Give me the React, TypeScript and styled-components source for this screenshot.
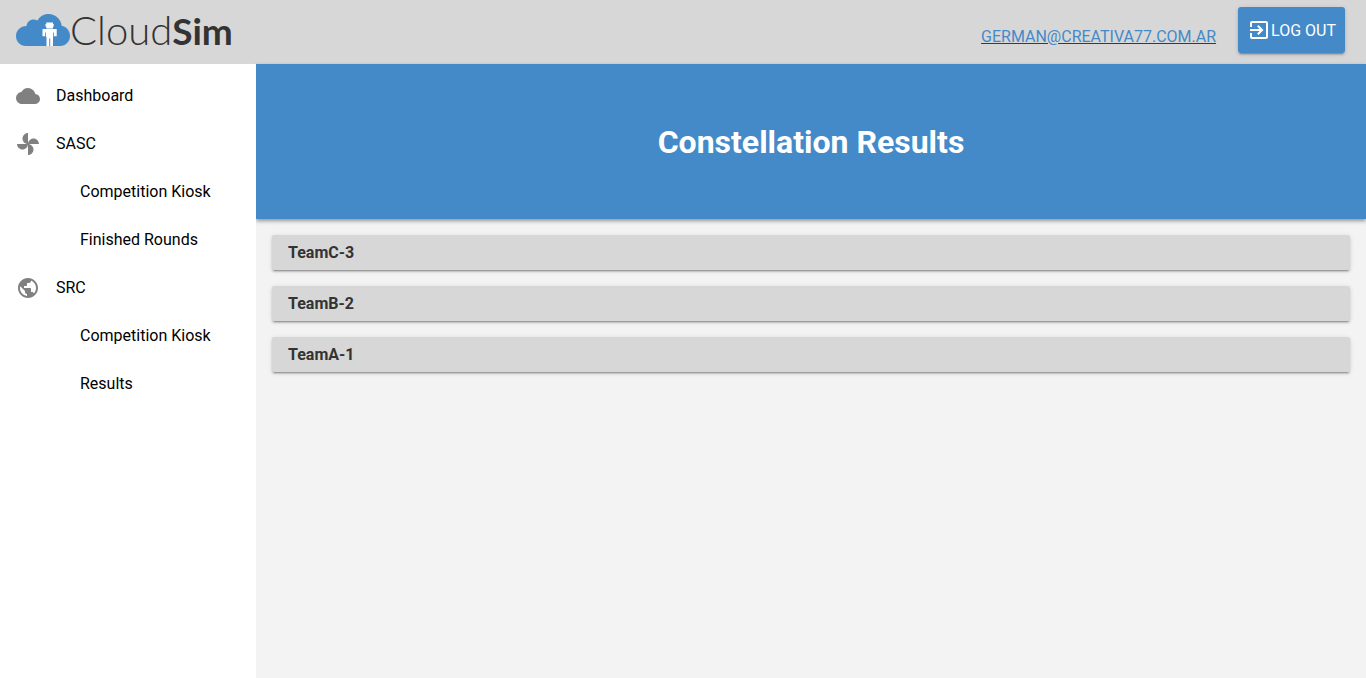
import React from "react";
import styled, { createGlobalStyle } from "styled-components";
import { MdCloud, MdExitToApp, MdPublic } from "react-icons/md";

const BLUE = "#448ac9";
const GREY = "#d7d7d7";
const INK = "#333333";

const GlobalStyle = createGlobalStyle`
  *, *::before, *::after { box-sizing: border-box; }
  body { margin: 0; background: #f3f3f3; font-family: Roboto, "Liberation Sans", sans-serif; font-size: 16px; }
`;

const Page = styled.div`
  display: flex;
  flex-direction: column;
  min-height: 100vh;
`;

const Toolbar = styled.header`
  display: flex;
  align-items: center;
  height: 64px;
  padding: 0 21px 0 16px;
  background: ${GREY};
`;

const Logo = styled.a`
  display: flex;
  align-items: center;
  padding-bottom: 4px;
  color: ${INK};
  text-decoration: none;
`;

const LogoMark = styled.svg`
  display: block;
  width: 54px;
  height: 32px;
`;

const LogoText = styled.span`
  font-family: Lato, "Open Sans", sans-serif;
  font-size: 40px;
  font-weight: 300;
  line-height: 48px;
  white-space: nowrap;
`;

const LogoStrong = styled.strong`
  font-size: 37px;
  font-weight: 700;
`;

const Account = styled.div`
  display: flex;
  align-items: center;
  gap: 22px;
  margin-left: auto;
`;

const AccountLink = styled.a`
  padding-top: 10px;
  color: ${BLUE};
  line-height: 24px;
  text-decoration: underline;
  text-decoration-color: #551a8b;
  text-transform: uppercase;
`;

const LogoutButton = styled.button`
  display: flex;
  align-items: center;
  height: 46px;
  margin-bottom: 4px;
  padding: 0 9px;
  border: 0;
  border-radius: 3px;
  background: ${BLUE};
  color: #ffffff;
  font: inherit;
  cursor: pointer;
  box-shadow: 0 3px 1px -2px rgba(0, 0, 0, 0.2), 0 2px 2px 0 rgba(0, 0, 0, 0.14), 0 1px 5px 0 rgba(0, 0, 0, 0.12);
`;

const Body = styled.div`
  display: flex;
  flex: 1;
`;

const Sidebar = styled.nav`
  position: relative;
  z-index: 1;
  flex: 0 0 256px;
  padding-top: 8px;
  background: #ffffff;
`;

const NavList = styled.ul`
  margin: 0;
  padding: 0;
  list-style: none;
`;

const NavLink = styled.a<{ $nested?: boolean }>`
  display: flex;
  align-items: center;
  gap: 16px;
  height: 48px;
  padding: 0 16px 0 ${({ $nested }) => ($nested ? "80px" : "16px")};
  color: #000000;
  text-decoration: none;

  svg { color: #808080; }
`;

const NavLabel = styled.span`
  padding-bottom: 2px;
`;

const Main = styled.main`
  flex: 1;
  min-width: 0;
`;

const Banner = styled.div`
  padding: 60px 16px 58px;
  background: ${BLUE};
  box-shadow: 0 2px 4px 0 rgba(0, 0, 0, 0.4);
`;

const Title = styled.h1`
  margin: 0;
  color: #ffffff;
  font-size: 32px;
  font-weight: 700;
  line-height: 37px;
  text-align: center;
`;

const Results = styled.div`
  display: flex;
  flex-direction: column;
  gap: 16px;
  padding: 16px;
`;

const TeamCard = styled.section`
  padding: 8px 16px;
  border-radius: 2px;
  background: ${GREY};
  box-shadow: 0 3px 1px -2px rgba(0, 0, 0, 0.2), 0 2px 2px 0 rgba(0, 0, 0, 0.14), 0 1px 5px 0 rgba(0, 0, 0, 0.12);
`;

const TeamName = styled.h2`
  margin: 0;
  color: ${INK};
  font-size: 16px;
  font-weight: 700;
  line-height: 19px;
`;

function FanIcon({ size = 24 }: { size?: number }) {
  return (
    <svg width={size} height={size} viewBox="0 0 24 24" fill="currentColor" aria-hidden="true">
      <path d="M12 12c0-3 2.500-5.500 5.500-5.500S23 9 23 12H12zm0 0c0 3-2.500 5.500-5.500 5.500S1 15 1 12h11zm0 0c-3 0-5.500-2.500-5.500-5.500S9 1 12 1v11zm0 0c3 0 5.500 2.500 5.500 5.500S15 23 12 23V12z" />
    </svg>
  );
}

const navItems = [
  { label: "Dashboard", icon: MdCloud },
  { label: "SASC", icon: FanIcon },
  { label: "Competition Kiosk" },
  { label: "Finished Rounds" },
  { label: "SRC", icon: MdPublic },
  { label: "Competition Kiosk" },
  { label: "Results" },
];

const teams = ["TeamC-3", "TeamB-2", "TeamA-1"];

export default function App() {
  return (
    <>
      <GlobalStyle />
      <Page>
        <Toolbar>
          <Logo href="#">
            <LogoMark viewBox="0 0 54 32" aria-hidden="true">
              <path
                fill={BLUE}
                d="M10 32C4 32 0 27.500 0 22C0 16.500 4.500 12 10.500 12C11 8 14 5.500 17.500 5.500C19 5.500 20.300 5.900 21.500 6.600C23.500 2.500 27.800 0 32.500 0C39.500 0 45 5 45.800 12C50.500 12.500 54 16.800 54 22C54 27.500 49.800 32 44 32Z"
              />
              <g fill="#ffffff">
                <path d="M30.300 8.500h6.700v1.500h.7v2.500h-.7v2h-6.700v-2h-.8v-2.500h.8z" />
                <path d="M26.500 15h14.200v7.200h-2.700v-3.700h-.8v4.500h-.2v9h-2.800v-7.500h-1v7.500h-2.700v-9h-.5v-4.500h-.8v3.700h-2.700z" />
              </g>
            </LogoMark>
            <LogoText>Cloud<LogoStrong>Sim</LogoStrong></LogoText>
          </Logo>
          <Account>
            <AccountLink href="#">german@creativa77.com.ar</AccountLink>
            <LogoutButton type="button">
              <MdExitToApp size={24} aria-hidden="true" />
              LOG OUT
            </LogoutButton>
          </Account>
        </Toolbar>
        <Body>
          <Sidebar>
            <NavList>
              {navItems.map(({ label, icon: Icon }, index) => (
                <li key={index}>
                  <NavLink href="#" $nested={!Icon}>
                    {Icon && <Icon size={24} aria-hidden="true" />}
                    <NavLabel>{label}</NavLabel>
                  </NavLink>
                </li>
              ))}
            </NavList>
          </Sidebar>
          <Main>
            <Banner>
              <Title>Constellation Results</Title>
            </Banner>
            <Results>
              {teams.map((team) => (
                <TeamCard key={team}>
                  <TeamName>{team}</TeamName>
                </TeamCard>
              ))}
            </Results>
          </Main>
        </Body>
      </Page>
    </>
  );
}
